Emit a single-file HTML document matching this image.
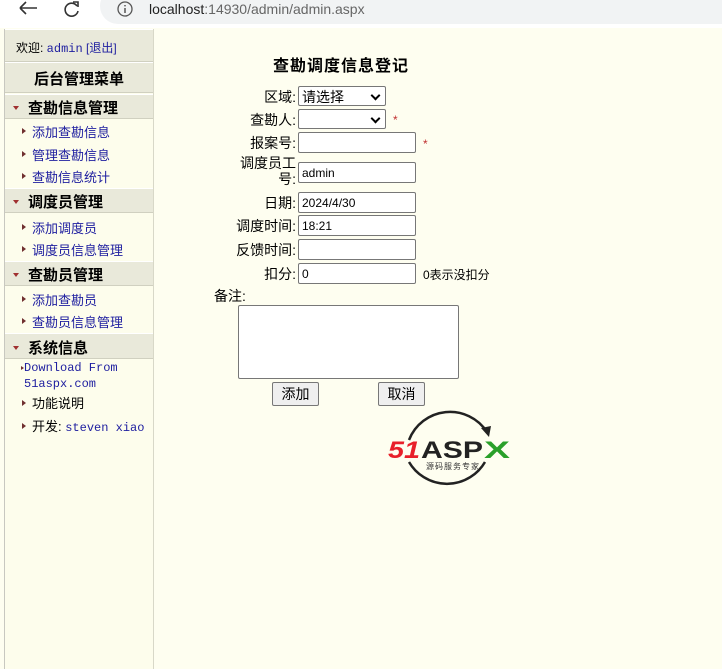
<!DOCTYPE html>
<html><head><meta charset="utf-8"><style>
*{margin:0;padding:0;box-sizing:border-box}
body{width:722px;height:665px;background:#fefef0;font-family:"Liberation Sans","Noto Sans CJK SC",sans-serif;font-size:13px;color:#000;position:relative;overflow:hidden}
.a{position:absolute;white-space:nowrap}
.chrome{position:absolute;left:0;top:0;width:722px;height:28px;background:#fff}
.pill{position:absolute;left:100px;top:-12px;width:640px;height:36px;border-radius:18px;background:#f1f3f4}
.side{position:absolute;left:4px;top:29px;width:150px;height:640px;background:#fdfdec;border-left:1px solid #c8c8c0;border-right:1px solid #d8d8c8}
.hd{position:absolute;left:0;width:148px;background:#e9e9da;border-top:1px solid #fff;border-bottom:1px solid #d0d0c0;font-weight:bold;font-size:15px}
.it{position:absolute;left:16px;color:#2020a0;font-size:13px}
.tri{position:absolute;width:0;height:0;border-top:3px solid transparent;border-bottom:3px solid transparent;border-left:4px solid #703030}
.dn{position:absolute;left:8px;width:0;height:0;border-left:3px solid transparent;border-right:3px solid transparent;border-top:4px solid #a03030}
.mono{font-family:"Liberation Mono",monospace}
.lbl{position:absolute;text-align:right;width:90px;font-size:14px}
.inp{position:absolute;background:#fff;border:1px solid #777;border-radius:2px;height:21px;font-size:12px;padding:3px 0 0 3px}
.sel{position:absolute;background:#fff;border:1px solid #777;border-radius:2px;height:20px;font-size:14px;padding:0 0 0 3px}
.sel:after{content:"";position:absolute;right:6px;top:5px;width:5px;height:5px;border-right:2px solid #000;border-bottom:2px solid #000;transform:rotate(45deg)}
.star{position:absolute;color:#c03030;font-size:12px}
.btn{position:absolute;background:#efefef;border:1px solid #777;border-radius:2px;height:24px;font-size:14px;text-align:center;line-height:22px}
</style></head><body>
<div class="chrome"><div class="pill"></div>
<svg class="a" style="left:16px;top:0" width="24" height="18"><path d="M4 8H21M4 8L10 2M4 8L10 14" stroke="#333" stroke-width="1.6" fill="none"/></svg>
<svg class="a" style="left:62px;top:0" width="20" height="18"><path d="M15 6A6.5 6.5 0 1 0 16 11" stroke="#333" stroke-width="1.6" fill="none"/><path d="M11 2L16 2L16 7" stroke="#333" stroke-width="1.6" fill="none"/></svg>
<svg class="a" style="left:116px;top:0" width="18" height="18"><circle cx="9" cy="9" r="7" stroke="#555" stroke-width="1.3" fill="none"/><path d="M9 8V13M9 5V6.4" stroke="#555" stroke-width="1.5"/></svg>
<div class="a" style="left:149px;top:1px;font-size:14px;color:#222">localhost<span style="color:#666">:14930/admin/admin.aspx</span></div>
</div>
<div class="side">
<div class="hd" style="top:0;height:33px;font-weight:normal;font-size:12px;padding:9px 0 0 11px">欢迎: <span class="mono" style="color:#2020a0">admin</span> <span style="color:#2020a0">[退出]</span></div>
<div class="hd" style="top:33px;height:31px;text-align:center;padding-top:5px">后台管理菜单</div>
<div class="hd" style="top:65px;height:25px;padding:2px 0 0 23px">查勘信息管理</div><div class="dn" style="top:77px"></div>
<div class="tri" style="left:17px;top:99px"></div><div class="it" style="left:27px;top:93px">添加查勘信息</div>
<div class="tri" style="left:17px;top:122px"></div><div class="it" style="left:27px;top:116px">管理查勘信息</div>
<div class="tri" style="left:17px;top:144px"></div><div class="it" style="left:27px;top:138px">查勘信息统计</div>
<div class="hd" style="top:159px;height:25px;padding:2px 0 0 23px">调度员管理</div><div class="dn" style="top:171px"></div>
<div class="tri" style="left:17px;top:195px"></div><div class="it" style="left:27px;top:189px">添加调度员</div>
<div class="tri" style="left:17px;top:217px"></div><div class="it" style="left:27px;top:211px">调度员信息管理</div>
<div class="hd" style="top:232px;height:25px;padding:2px 0 0 23px">查勘员管理</div><div class="dn" style="top:244px"></div>
<div class="tri" style="left:17px;top:267px"></div><div class="it" style="left:27px;top:261px">添加查勘员</div>
<div class="tri" style="left:17px;top:289px"></div><div class="it" style="left:27px;top:283px">查勘员信息管理</div>
<div class="hd" style="top:304px;height:26px;padding:3px 0 0 23px">系统信息</div><div class="dn" style="top:317px"></div>
<div class="tri" style="left:16px;top:337px;border-width:2px 0 2px 3px"></div>
<div class="it mono" style="left:19px;top:331px;font-size:12px;line-height:16px">Download From<br>51aspx.com</div>
<div class="tri" style="left:17px;top:371px"></div><div class="a" style="left:27px;top:364px">功能说明</div>
<div class="tri" style="left:17px;top:394px"></div><div class="a" style="left:27px;top:387px">开发: <span class="mono" style="color:#2020a0;font-size:12px">steven xiao</span></div>
</div>
<div class="a" style="left:273px;top:52px;font-size:16px;font-weight:bold;letter-spacing:1px">查勘调度信息登记</div>
<div class="lbl" style="left:206px;top:87px">区域:</div><div class="sel" style="left:298px;top:86px;width:88px">请选择</div>
<div class="lbl" style="left:206px;top:110px">查勘人:</div><div class="sel" style="left:298px;top:109px;width:88px"></div><div class="star" style="left:393px;top:113px">*</div>
<div class="lbl" style="left:206px;top:133px">报案号:</div><div class="inp" style="left:298px;top:132px;width:118px"></div><div class="star" style="left:423px;top:137px">*</div>
<div class="lbl" style="left:206px;top:155px;line-height:16px">调度员工<br>号:</div><div class="inp" style="left:298px;top:162px;width:118px">admin</div>
<div class="lbl" style="left:206px;top:193px">日期:</div><div class="inp" style="left:298px;top:192px;width:118px">2024/4/30</div>
<div class="lbl" style="left:206px;top:216px">调度时间:</div><div class="inp" style="left:298px;top:215px;width:118px">18:21</div>
<div class="lbl" style="left:206px;top:240px">反馈时间:</div><div class="inp" style="left:298px;top:239px;width:118px"></div>
<div class="lbl" style="left:206px;top:264px">扣分:</div><div class="inp" style="left:298px;top:263px;width:118px">0</div>
<div class="a" style="left:423px;top:266px;font-size:12px">0表示没扣分</div>
<div class="a" style="left:214px;top:286px;font-size:14px">备注:</div>
<div class="a" style="left:238px;top:305px;width:221px;height:74px;background:#fff;border:1px solid #777;border-radius:2px"></div>
<div class="btn" style="left:272px;top:382px;width:47px">添加</div>
<div class="btn" style="left:378px;top:382px;width:47px">取消</div>
<svg class="a" style="left:385px;top:400px" width="130" height="96">
<path d="M24 40A44 44 0 0 1 102 32" stroke="#222" stroke-width="2.5" fill="none"/>
<path d="M96 28L104 37L106 26Z" fill="#222"/>
<path d="M100 62A44 44 0 0 1 24 62" stroke="#222" stroke-width="2.5" fill="none"/>
<text x="3" y="58" font-family="Liberation Sans,sans-serif" font-weight="bold" font-style="italic" font-size="24" fill="#e8202a" textLength="32" lengthAdjust="spacingAndGlyphs">51</text>
<text x="36" y="58" font-family="Liberation Sans,sans-serif" font-weight="bold" font-size="24" fill="#222" textLength="62" lengthAdjust="spacingAndGlyphs">ASP</text>
<text x="99" y="58" font-family="Liberation Sans,sans-serif" font-weight="bold" font-size="24" fill="#2aa02a" textLength="26" lengthAdjust="spacingAndGlyphs">X</text>
<text x="41" y="69" font-family="Noto Sans CJK SC,sans-serif" font-size="8" fill="#333" letter-spacing="1">源码服务专家</text>
</svg>
</body></html>
